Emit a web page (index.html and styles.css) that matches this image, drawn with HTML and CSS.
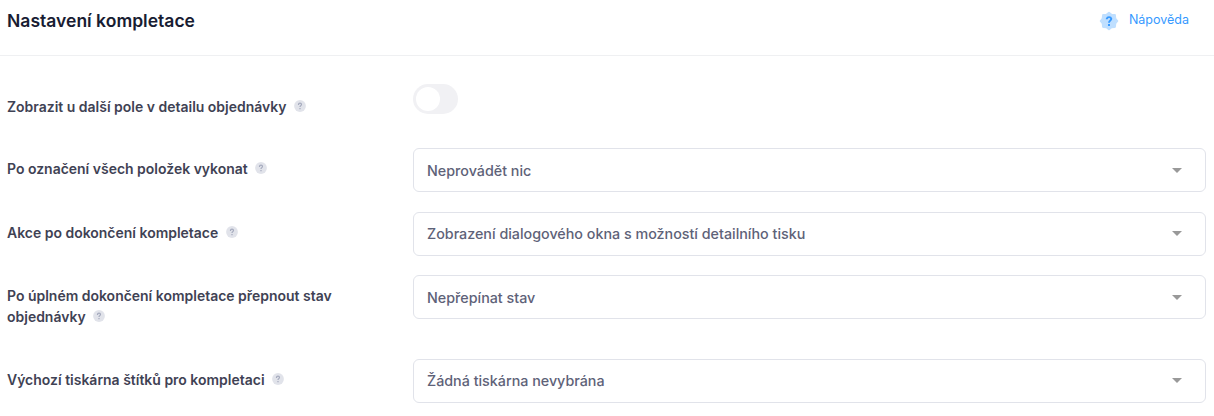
FILE: index.html
```html
<!DOCTYPE html>
<html lang="cs">
<head>
<meta charset="utf-8">
<title>Nastavení kompletace</title>
<link rel="stylesheet" href="styles.css">
</head>
<body>
<svg class="defs" aria-hidden="true">
  <symbol id="hint" viewBox="0 0 12 12">
    <circle cx="6" cy="6" r="5.900" fill="#e1e3ea"/>
    <path fill="none" stroke="#a5aabd" stroke-width="1.200" d="M4.500 4.900V4.600a1.500 1.400 0 0 1 3 0C7.500 5.700 6 5.600 6 7M6 8v1.200"/>
  </symbol>
</svg>
<header class="header">
  <h1 class="title">Nastavení kompletace</h1>
  <a class="help"><svg class="help-icon" viewBox="0 0 20 20"><path fill="#bfdfff" stroke="#bfdfff" stroke-width="2" stroke-linejoin="round" d="M10 1.700 12.500 3.700 15.900 4.100 16.300 7.500 18.300 10 16.300 12.500 15.900 15.900 12.500 16.300 10 18.300 7.500 16.300 4.100 15.900 3.700 12.500 1.700 10 3.700 7.500 4.100 4.100 7.500 3.700z"/><path fill="none" stroke="#3699ff" stroke-width="1.900" d="M7.800 8.200V7.700a2.300 2 0 0 1 4.500 0C12.300 9.600 10 9.300 10 11.800M10 13v2"/></svg><span class="help-text">Nápověda</span></a>
</header>
<main class="form">
  <div class="row row-switch"><div class="label">Zobrazit u další pole v detailu objednávky<svg class="hint"><use href="#hint"/></svg></div><div class="switch"></div></div>
  <div class="row"><div class="label">Po označení všech položek vykonat<svg class="hint"><use href="#hint"/></svg></div><div class="select">Neprovádět nic</div></div>
  <div class="row"><div class="label">Akce po dokončení kompletace<svg class="hint"><use href="#hint"/></svg></div><div class="select">Zobrazení dialogového okna s možností detailního tisku</div></div>
  <div class="row row-tall"><div class="label">Po úplném dokončení kompletace přepnout stav objednávky<svg class="hint"><use href="#hint"/></svg></div><div class="select">Nepřepínat stav</div></div>
  <div class="row"><div class="label">Výchozí tiskárna štítků pro kompletaci<svg class="hint"><use href="#hint"/></svg></div><div class="select">Žádná tiskárna nevybrána</div></div>
</main>
</body>
</html>
```

FILE: styles.css
```css
* { box-sizing: border-box; }
body { margin: 0; background: #fff; color: #3f4254; font-family: Inter, sans-serif; }
.defs { display: none; }
.header { height: 56px; border-bottom: 1px solid #eff0f2; display: flex; justify-content: space-between; padding: 0 25px 0 7px; }
.title { margin: 0; padding-top: 8px; font-size: 17.550px; line-height: 26px; font-weight: 600; color: #181c32; }
.help { display: flex; align-items: center; gap: 10px; height: 41px; font-size: 12.500px; font-weight: 400; color: #3699ff; }
.help-icon { width: 20px; height: 20px; }
.help-text { padding-bottom: 2px; }
.form { padding: 28px 8px 0 7px; }
.row { display: grid; grid-template-columns: 406px 1fr; height: 63.500px; align-items: start; }
.row-switch { height: 64px; }
.row-tall { height: 83.900px; }
.label { width: 345px; padding-top: 10px; font-size: 13.975px; line-height: 21px; font-weight: 600; }
.row-switch .label { padding-top: 12px; }
.hint { width: 12px; height: 12px; margin-left: 7.500px; vertical-align: 0; }
.switch { width: 45px; height: 30px; border-radius: 15px; background: #f1f1f4; padding: 3px; }
.switch::before { content: ""; display: block; width: 24px; height: 24px; border-radius: 50%; background: #fff; }
.select { height: 44px; border: 1px solid #e1e3ea; border-radius: 6px; padding: 0 23px 0 13px; display: flex; align-items: center; justify-content: space-between; font-size: 14.300px; color: #5e6278; font-weight: 500; }
.select::after { content: ""; border: 5px solid transparent; border-top-color: #999; border-bottom: 0; }
```
